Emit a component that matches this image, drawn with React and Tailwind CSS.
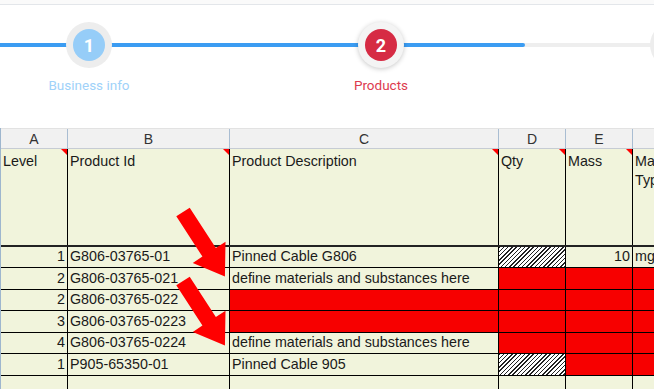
const steps = [
  { n: 1, label: 'Business info', ring: 'bg-[#ededed]', dot: 'bg-[#96cdf8]', text: 'text-[#9fd2f9]' },
  { n: 2, label: 'Products', ring: 'bg-[#f4f4f4] shadow-[0_1px_5px_rgba(0,0,0,0.22)]', dot: 'bg-[#d62b44]', text: 'text-[#dd3a4f]' },
  { n: 3, label: '', ring: 'bg-[#ededed]', dot: 'bg-[#cfcfcf]', text: 'text-[#bbb]' },
];

const cols = ['A', 'B', 'C', 'D', 'E', 'F'];
const heads = ['Level', 'Product Id', 'Product Description', 'Qty', 'Mass', 'Material Type'];

// cell kinds: 'r' right aligned, 'red', 'hatch'
const rows = [
  { h: 'h-[21px]', cells: [['1', 'r'], ['G806-03765-01'], ['Pinned Cable G806'], ['', 'hatch'], ['10', 'r'], ['mg']] },
  { h: 'h-[22px]', cells: [['2', 'r'], ['G806-03765-021'], ['define materials and substances here'], ['', 'red'], ['', 'red'], ['', 'red']] },
  { h: 'h-[21px]', cells: [['2', 'r'], ['G806-03765-022'], ['', 'red'], ['', 'red'], ['', 'red'], ['', 'red']] },
  { h: 'h-[22px]', cells: [['3', 'r'], ['G806-03765-0223'], ['', 'red'], ['', 'red'], ['', 'red'], ['', 'red']] },
  { h: 'h-[21px]', cells: [['4', 'r'], ['G806-03765-0224'], ['define materials and substances here'], ['', 'red'], ['', 'red'], ['', 'red']] },
  { h: 'h-[22px]', cells: [['1', 'r'], ['P905-65350-01'], ['Pinned Cable 905'], ['', 'hatch'], ['', 'red'], ['', 'red']] },
  { h: 'h-[22px]', cells: [[''], [''], [''], [''], [''], ['']] },
];

const grid = 'grid grid-cols-[67px_162px_269px_67px_67px_70px]';

function Stepper() {
  return (
    <div className="relative h-[123px]">
      <div className="absolute left-0 right-0 top-[38px] h-[4px] bg-[#eeeeee]">
        <div className="h-full w-[525px] rounded-r-full bg-[#3b9cf2]" />
      </div>
      <div className="relative flex ml-[-57px]">
        {steps.map((s) => (
          <div key={s.n} className="w-[292px] shrink-0 flex flex-col items-center pt-[17px]">
            <div className={`w-[46px] h-[46px] rounded-full flex items-center justify-center ${s.ring}`}>
              <div className={`w-[32px] h-[32px] rounded-full flex items-center justify-center text-white font-bold text-[18px] ${s.dot}`}>
                {s.n}
              </div>
            </div>
            <div className={`mt-[9px] h-[16px] text-[13.5px] leading-[16px] ${s.text}`}>{s.label}</div>
          </div>
        ))}
      </div>
    </div>
  );
}

function Sheet() {
  return (
    <div className="font-['Liberation_Sans',Arial,sans-serif] text-[14.3px] text-[#1a1a1a] border-l border-l-[#9eb6ce]">
      <div className={`${grid} h-[21px] bg-[#f1f1f1] border-t border-t-[#e2e2e2] border-b border-b-[#c6ccd4]`}>
        {cols.map((c) => (
          <div key={c} className="flex items-center justify-center border-r border-r-[#a9bdd2] text-[14px] text-[#333]">
            {c}
          </div>
        ))}
      </div>
      <div className={`${grid} h-[98px] bg-[#f1f4dc] border-b-2 border-b-[#222]`}>
        {heads.map((h) => (
          <div key={h} className="relative border-r border-r-black px-[2px] pt-[3px] leading-[19px] overflow-hidden">
            {h}
            <span className="absolute right-0 top-0 w-0 h-0 border-l-[6px] border-l-transparent border-t-[6px] border-t-[#ff0000]" />
          </div>
        ))}
      </div>
      {rows.map((r, i) => (
        <div key={i} className={`${grid} ${r.h} border-b border-b-black bg-[#f1f4dc]`}>
          {r.cells.map(([t, k], j) => (
            <div
              key={j}
              className={`border-r border-r-black px-[2px] flex items-center whitespace-nowrap overflow-hidden ${
                k === 'r' ? 'justify-end' : ''
              } ${k === 'red' ? 'bg-[#f70000]' : ''} ${
                k === 'hatch' ? 'bg-[repeating-linear-gradient(135deg,#222_0px,#222_1px,#fff_1px,#fff_3px)]' : ''
              }`}
            >
              {t}
            </div>
          ))}
        </div>
      ))}
    </div>
  );
}

function Arrow({ x, y }) {
  return (
    <polygon
      points="0,-8 48,-8 48,-19.5 77,0 48,19.5 48,8 0,8"
      fill="#ff0000"
      transform={`translate(${x} ${y}) rotate(57)`}
    />
  );
}

export default function App() {
  return (
    <div className="relative w-[654px] h-[389px] overflow-hidden bg-white font-['Roboto',sans-serif]">
      <div className="h-[5px] border-b border-b-[#e3e6ea] bg-[#fafafa]" />
      <Stepper />
      <Sheet />
      <svg className="absolute left-0 top-0 pointer-events-none" width="654" height="389">
        <Arrow x={183} y={212} />
        <Arrow x={183} y={281} />
      </svg>
    </div>
  );
}
